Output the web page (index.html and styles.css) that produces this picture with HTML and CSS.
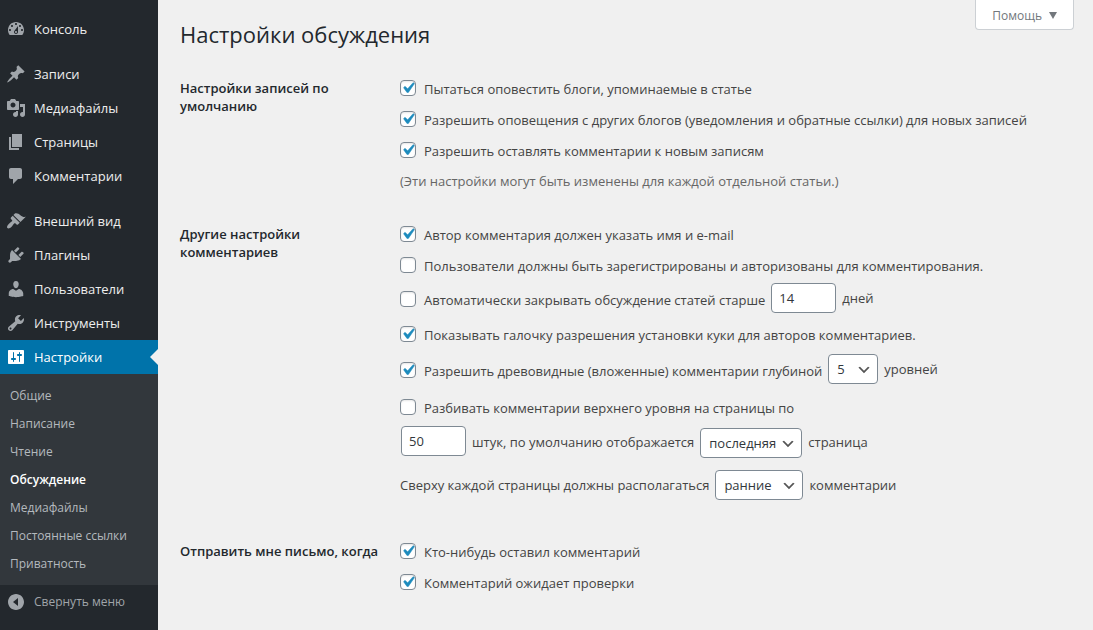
FILE: index.html
```html
<!DOCTYPE html>
<html lang="ru">
<head>
<meta charset="utf-8">
<meta name="viewport" content="width=device-width, initial-scale=1">
<title>Настройки обсуждения</title>
<link rel="stylesheet" href="styles.css">
</head>
<body>
<div class="layout">
  <nav class="sidebar" aria-label="Главное меню">
    <ul class="menu">
      <li><a class="menu-link" href="#"><svg class="icon" viewBox="0 0 20 20"><path fill-rule="evenodd" d="M3.76 16h12.48c1.1-1.37 1.76-3.11 1.76-5 0-4.42-3.58-8-8-8s-8 3.58-8 8c0 1.89.66 3.63 1.76 5zM10 4c.55 0 1 .45 1 1s-.45 1-1 1-1-.45-1-1 .45-1 1-1zM6 6c.55 0 1 .45 1 1s-.45 1-1 1-1-.45-1-1 .45-1 1-1zm8 0c.55 0 1 .45 1 1s-.45 1-1 1-1-.45-1-1 .45-1 1-1zm-5.37 5.55L12 7v6c0 1.1-.9 2-2 2s-2-.9-2-2c0-.57.24-1.08.63-1.45zM4 10c.55 0 1 .45 1 1s-.45 1-1 1-1-.45-1-1 .45-1 1-1zm12 0c.55 0 1 .45 1 1s-.45 1-1 1-1-.45-1-1 .45-1 1-1zm-5 3c0-.55-.45-1-1-1s-1 .45-1 1 .45 1 1 1 1-.45 1-1z"/></svg>Консоль</a></li>
      <li class="menu-group"><a class="menu-link" href="#"><svg class="icon" viewBox="0 0 20 20"><path d="M10.44 3.02l1.82-1.82 6.36 6.35-1.83 1.82c-1.05-.68-2.48-.57-3.41.36l-.75.75c-.92.93-1.04 2.35-.35 3.41l-1.83 1.82-2.41-2.41-2.8 2.79c-.42.42-3.38 2.71-3.8 2.29s1.86-3.39 2.28-3.81l2.79-2.79L4.1 9.36l1.83-1.82c1.05.69 2.48.57 3.4-.36l.75-.75c.93-.92 1.05-2.35.36-3.41z"/></svg>Записи</a></li>
      <li><a class="menu-link" href="#"><svg class="icon" viewBox="0 0 20 20"><path fill-rule="evenodd" d="M13 11V4c0-.55-.45-1-1-1h-1.67L9 1H5L3.67 3H2c-.55 0-1 .45-1 1v7c0 .55.45 1 1 1h10c.55 0 1-.45 1-1zM7 4.5c1.38 0 2.5 1.12 2.5 2.5S8.38 9.5 7 9.5 4.5 8.38 4.5 7 5.62 4.5 7 4.5zM14 6h5v10.5c0 1.38-1.12 2.5-2.5 2.5S14 17.88 14 16.5s1.12-2.5 2.5-2.5c.17 0 .34.02.5.05V9h-3V6zm-4 8.05V13h2v3.5c0 1.38-1.12 2.5-2.5 2.5S7 17.88 7 16.5 8.12 14 9.5 14c.17 0 .34.02.5.05z"/></svg>Медиафайлы</a></li>
      <li><a class="menu-link" href="#"><svg class="icon" viewBox="0 0 20 20"><path d="M6 15V2h10v13H6zm-1 1h8v2H3V5h2v11z"/></svg>Страницы</a></li>
      <li><a class="menu-link" href="#"><svg class="icon" viewBox="0 0 20 20"><path d="M5 2h9c1.1 0 2 .9 2 2v7c0 1.1-.9 2-2 2h-2l-5 5v-5H5c-1.1 0-2-.9-2-2V4c0-1.1.9-2 2-2z"/></svg>Комментарии</a></li>
      <li class="menu-group"><a class="menu-link" href="#"><svg class="icon" viewBox="0 0 20 20"><path d="M14.48 11.06L7.41 3.99l1.5-1.5c.5-.56 2.3-.47 3.51.32 1.21.8 1.43 1.28 2.91 2.1 1.18.64 2.45 1.26 4.45.85zm-.71.71L6.7 4.7 4.93 6.47c-.39.39-.39 1.02 0 1.41l1.06 1.06c.39.39.39 1.03 0 1.42-.6.6-1.43 1.11-2.21 1.69-.35.26-.7.53-1.01.84C1.43 14.23.4 16.08 1.4 17.07c.99 1 2.84-.03 4.18-1.36.31-.31.58-.66.85-1.02.57-.78 1.08-1.61 1.69-2.21.39-.39 1.02-.39 1.41 0l1.06 1.06c.39.39 1.02.39 1.41 0z"/></svg>Внешний вид</a></li>
      <li><a class="menu-link" href="#"><svg class="icon" viewBox="0 0 20 20"><path d="M13.11 4.36L9.87 7.6 8 5.73l3.24-3.24c.35-.34 1.05-.2 1.56.32.52.51.66 1.21.31 1.55zm-8 1.77l.91-1.12 9.01 9.01-1.19.84c-.71.71-2.63 1.16-3.82 1.16H6.14L4.9 17.26c-.59.59-1.54.59-2.12 0-.59-.58-.59-1.53 0-2.12l1.24-1.24v-3.88c0-1.13.4-3.19 1.09-3.89zm7.26 3.97l3.24-3.24c.34-.35 1.04-.21 1.55.31.52.51.66 1.21.31 1.55l-3.24 3.25z"/></svg>Плагины</a></li>
      <li><a class="menu-link" href="#"><svg class="icon" viewBox="0 0 20 20"><path d="M10 9.25c-2.27 0-2.73-3.44-2.73-3.44C7 4.02 7.82 2 9.97 2c2.16 0 2.98 2.02 2.71 3.81 0 0-.41 3.44-2.68 3.44zm0 2.57L12.72 10c2.39 0 4.52 2.33 4.52 4.53v2.49s-3.65 1.13-7.24 1.13c-3.65 0-7.24-1.13-7.24-1.13v-2.49c0-2.25 1.94-4.48 4.47-4.48z"/></svg>Пользователи</a></li>
      <li><a class="menu-link" href="#"><svg class="icon" viewBox="0 0 20 20"><path fill-rule="evenodd" d="M16.68 9.77c-1.34 1.34-3.3 1.67-4.95.99l-5.41 6.52c-.99.99-2.59.99-3.58 0s-.99-2.59 0-3.57l6.52-5.42c-.68-1.65-.35-3.61.99-4.95 1.28-1.28 3.12-1.62 4.72-1.06l-2.89 2.89 2.82 2.82 2.86-2.87c.53 1.58.18 3.39-1.08 4.65zM3.81 16.21c.4.39 1.04.39 1.43 0 .4-.4.4-1.04 0-1.43-.39-.4-1.03-.4-1.43 0-.39.39-.39 1.03 0 1.43z"/></svg>Инструменты</a></li>
      <li>
        <a class="menu-link menu-link-current" href="#"><svg class="icon" viewBox="0 0 20 20"><path fill-rule="evenodd" d="M18 16V4c0-.55-.45-1-1-1H3c-.55 0-1 .45-1 1v12c0 .55.45 1 1 1h14c.55 0 1-.45 1-1zM8 11h1c.55 0 1 .45 1 1s-.45 1-1 1H8v1.5c0 .28-.22.5-.5.5s-.5-.22-.5-.5V13H6c-.55 0-1-.45-1-1s.45-1 1-1h1V5.5c0-.28.22-.5.5-.5s.5.22.5.5V11zm5-2h-1c-.55 0-1-.45-1-1s.45-1 1-1h1V5.5c0-.28.22-.5.5-.5s.5.22.5.5V7h1c.55 0 1 .45 1 1s-.45 1-1 1h-1v5.5c0 .28-.22.5-.5.5s-.5-.22-.5-.5V9z"/></svg>Настройки</a>
        <ul class="submenu">
          <li><a class="submenu-link" href="#">Общие</a></li>
          <li><a class="submenu-link" href="#">Написание</a></li>
          <li><a class="submenu-link" href="#">Чтение</a></li>
          <li><a class="submenu-link submenu-link-current" href="#" aria-current="page">Обсуждение</a></li>
          <li><a class="submenu-link" href="#">Медиафайлы</a></li>
          <li><a class="submenu-link" href="#">Постоянные ссылки</a></li>
          <li><a class="submenu-link" href="#">Приватность</a></li>
        </ul>
      </li>
    </ul>
    <button class="collapse" type="button"><svg class="icon" viewBox="0 0 20 20"><path fill-rule="evenodd" d="M10 2c4.42 0 8 3.58 8 8s-3.58 8-8 8-8-3.58-8-8 3.58-8 8-8zM12 6l-5 4 5 4z"/></svg>Свернуть меню</button>
  </nav>

  <main class="content">
    <header class="header">
      <h1 class="title">Настройки обсуждения</h1>
      <button class="help" type="button">Помощь<svg class="help-arrow" viewBox="0 0 8 7"><path d="M0 0h8L4 7z"/></svg></button>
    </header>

    <form class="form">
      <section class="section" aria-labelledby="sec-default">
        <h2 class="section-title" id="sec-default">Настройки записей по умолчанию</h2>
        <div class="section-body">
          <div class="row"><label class="check"><input class="checkbox" type="checkbox" checked>Пытаться оповестить блоги, упоминаемые в статье</label></div>
          <div class="row"><label class="check"><input class="checkbox" type="checkbox" checked>Разрешить оповещения с других блогов (уведомления и обратные ссылки) для новых записей</label></div>
          <div class="row"><label class="check"><input class="checkbox" type="checkbox" checked>Разрешить оставлять комментарии к новым записям</label></div>
          <p class="row hint">(Эти настройки могут быть изменены для каждой отдельной статьи.)</p>
        </div>
      </section>

      <section class="section" aria-labelledby="sec-other">
        <h2 class="section-title" id="sec-other">Другие настройки комментариев</h2>
        <div class="section-body">
          <div class="row"><label class="check"><input class="checkbox" type="checkbox" checked>Автор комментария должен указать имя и e-mail</label></div>
          <div class="row"><label class="check"><input class="checkbox" type="checkbox">Пользователи должны быть зарегистрированы и авторизованы для комментирования.</label></div>
          <div class="row row-days">
            <label class="check check-inline" for="close-old"><input class="checkbox" type="checkbox" id="close-old">Автоматически закрывать обсуждение статей старше</label>
            <input class="field" type="text" inputmode="numeric" id="days" value="14">
            <label for="days">дней</label>
          </div>
          <div class="row"><label class="check"><input class="checkbox" type="checkbox" checked>Показывать галочку разрешения установки куки для авторов комментариев.</label></div>
          <div class="row row-depth">
            <label class="check check-inline" for="threads"><input class="checkbox" type="checkbox" id="threads" checked>Разрешить древовидные (вложенные) комментарии глубиной</label>
            <select class="select" id="depth"><option>5</option></select>
            <label for="depth">уровней</label>
          </div>
          <div class="row"><label class="check"><input class="checkbox" type="checkbox">Разбивать комментарии верхнего уровня на страницы по</label></div>
          <div class="row row-pages">
            <input class="field" type="text" inputmode="numeric" id="per-page" value="50">
            <label for="per-page">штук, по умолчанию отображается</label>
            <select class="select select-page" id="default-page"><option>последняя</option></select>
            <label for="default-page">страница</label>
          </div>
          <div class="row row-order">
            <label for="order">Сверху каждой страницы должны располагаться</label>
            <select class="select select-order" id="order"><option>ранние</option></select>
            <label for="order">комментарии</label>
          </div>
        </div>
      </section>

      <section class="section" aria-labelledby="sec-mail">
        <h2 class="section-title" id="sec-mail">Отправить мне письмо, когда</h2>
        <div class="section-body">
          <div class="row"><label class="check"><input class="checkbox" type="checkbox" checked>Кто-нибудь оставил комментарий</label></div>
          <div class="row"><label class="check"><input class="checkbox" type="checkbox" checked>Комментарий ожидает проверки</label></div>
        </div>
      </section>
    </form>
  </main>
</div>
</body>
</html>
```
FILE: styles.css
```css
* {
  box-sizing: border-box;
}

body {
  margin: 0;
  background: #f0f0f0;
  color: #444;
  font: 13px/18px "Open Sans", "Noto Sans", sans-serif;
}

button,
input,
select {
  font: inherit;
}

ul {
  margin: 0;
  padding: 0;
  list-style: none;
}

.layout {
  display: flex;
  min-height: 100vh;
}

/* Sidebar */

.sidebar {
  flex: 0 0 158px;
  padding-top: 12px;
  background: #23282d;
}

.menu-group {
  margin-top: 11px;
}

.menu-link,
.collapse {
  display: flex;
  align-items: center;
  gap: 8px;
  width: 100%;
  height: 34px;
  padding: 0 6px;
  color: #eee;
  text-decoration: none;
}

.icon {
  flex: none;
  width: 20px;
  height: 20px;
  fill: #a0a5aa;
}

.menu-link-current {
  position: relative;
  background: #0073aa;
  color: #fff;
}

.menu-link-current .icon {
  fill: #fff;
}

.menu-link-current::after {
  content: "";
  position: absolute;
  top: 9px;
  right: 0;
  border: 8px solid transparent;
  border-left-width: 0;
  border-right-color: #f0f0f0;
}

.submenu {
  padding: 8px 0 7px;
  background: #32373c;
}

.submenu-link {
  display: block;
  padding: 5px 10px;
  color: #b4b9be;
  font-size: 12px;
  text-decoration: none;
}

.submenu-link-current {
  color: #fff;
  font-weight: 600;
}

.collapse {
  border: 0;
  background: none;
  color: #a0a5aa;
  font-size: 12px;
}

/* Content */

.content {
  flex: 1;
  min-width: 0;
  padding: 0 19px 20px 22px;
}

.header {
  display: flex;
  align-items: flex-start;
  justify-content: space-between;
  padding-bottom: 24px;
}

.title {
  margin: 0;
  padding-top: 19px;
  color: #23282d;
  font-size: 22px;
  font-weight: 400;
  line-height: 30px;
}

.help {
  display: flex;
  align-items: center;
  gap: 7px;
  height: 30px;
  padding: 2px 16px 0;
  border: 1px solid #ccd0d4;
  border-top: 0;
  border-radius: 0 0 4px 4px;
  background: #fff;
  color: #72777c;
  font-size: 12px;
}

.help-arrow {
  width: 8px;
  height: 7px;
  fill: #72777c;
}

.section {
  display: grid;
  grid-template-columns: 200px 1fr;
  column-gap: 20px;
  padding-bottom: 22px;
}

.section-title {
  margin: 0;
  padding-top: 6px;
  color: #23282d;
  font-size: 13px;
  font-weight: 600;
  line-height: 18px;
}

.row {
  display: flex;
  align-items: center;
  gap: 6px;
  min-height: 31px;
  margin: 0;
}

.hint {
  padding-bottom: 2px;
  color: #666;
}

.row-days {
  padding: 2px 0 6px;
}

.row-depth {
  padding: 4px 0 8px;
}

.row-pages {
  min-height: 41px;
  padding: 3px 0 6px 1px;
}

.row-pages .field {
  align-self: flex-start;
}

.row-pages .select {
  align-self: flex-end;
}

.row-order {
  padding: 6px 0 14px;
}

.check {
  display: flex;
  align-items: flex-start;
  gap: 8px;
}

.check-inline {
  padding-top: 3px;
}

.checkbox {
  flex: none;
  width: 16px;
  height: 16px;
  margin: 0;
  border: 1px solid #7e8993;
  border-radius: 4px;
  background: #fff center / 21px 21px no-repeat;
  box-shadow: inset 0 1px 2px rgba(0, 0, 0, 0.1);
  appearance: none;
}

.checkbox:checked {
  background-image: url("data:image/svg+xml,%3Csvg xmlns='http://www.w3.org/2000/svg' viewBox='0 0 20 20'%3E%3Cpath d='M14.83 4.89l1.34.94-5.81 8.38H9.02L5.78 9.67l1.34-1.25 2.57 2.4z' fill='%231e8cbe' stroke='%231e8cbe' stroke-width='.5'/%3E%3C/svg%3E");
}

.field,
.select {
  height: 30px;
  border: 1px solid #7e8993;
  border-radius: 4px;
  background: #fff;
  color: #32373c;
}

.field {
  width: 65px;
  padding: 0 7px;
}

.select {
  width: 50px;
  padding: 0 24px 0 8px;
  background-image: url("data:image/svg+xml,%3Csvg xmlns='http://www.w3.org/2000/svg' viewBox='0 0 20 20'%3E%3Cpath d='M5 6l5 5 5-5 2 1-7 7-7-7 2-1z' fill='%23555'/%3E%3C/svg%3E");
  background-position: right 5px top 55%;
  background-repeat: no-repeat;
  background-size: 16px 16px;
  appearance: none;
}

.select-page {
  width: 102px;
}

.select-order {
  width: 88px;
}
```
